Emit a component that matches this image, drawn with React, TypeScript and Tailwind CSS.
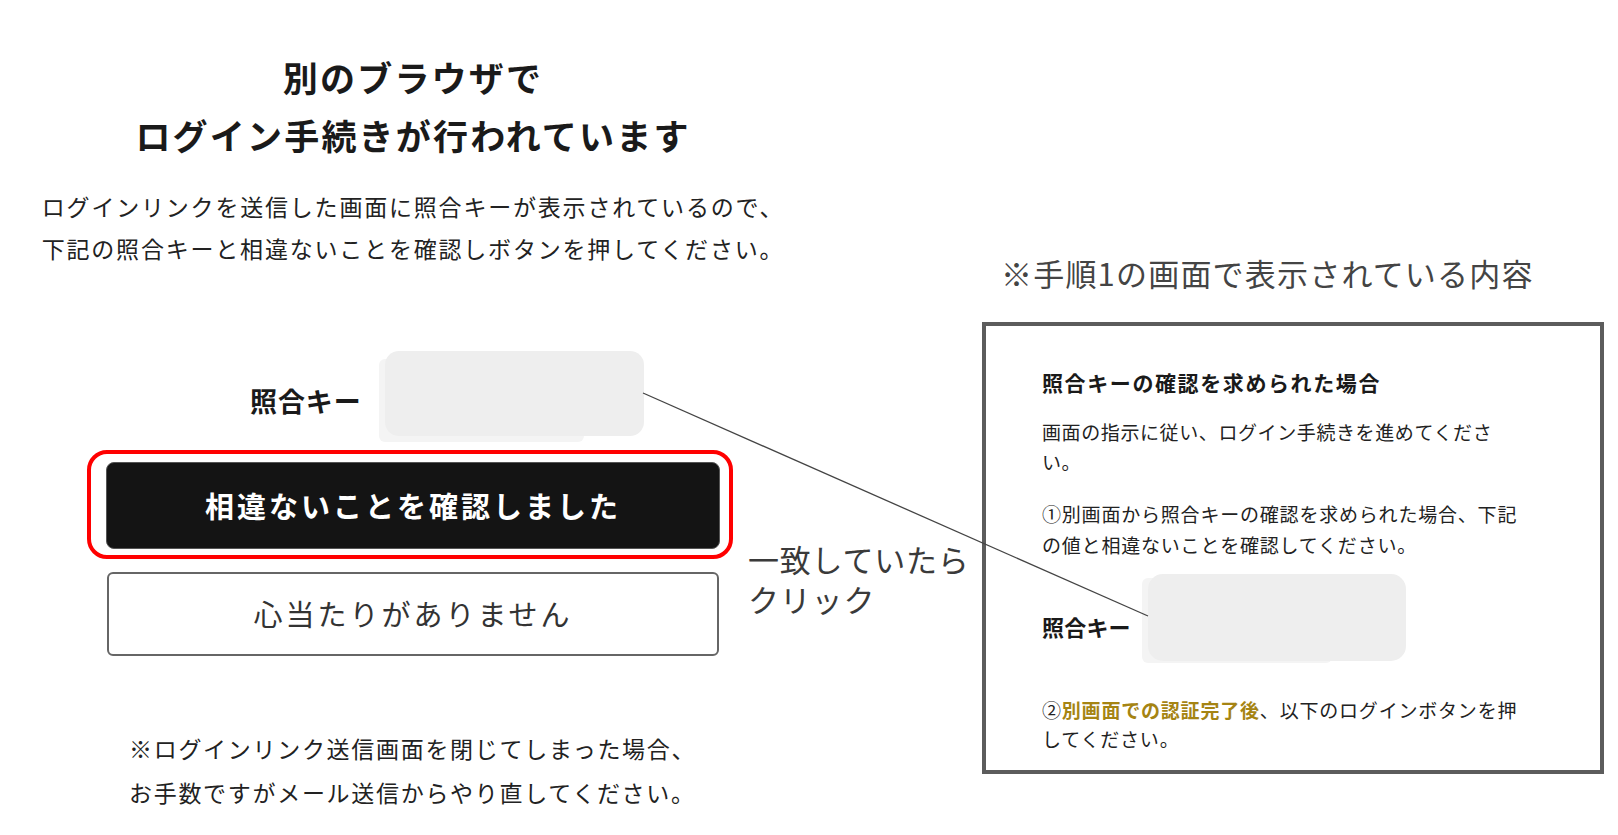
import React from "react";

const jp = { fontFamily: '"Noto Sans CJK JP", "Noto Sans", sans-serif' };

export default function App() {
  return (
    <div
      className="relative w-[1618px] h-[835px] bg-white overflow-hidden flex items-start text-[#222]"
      style={jp}
    >
      {/* Left column */}
      <div className="w-[826px] shrink-0 flex flex-col items-center pt-[48px]">
        <h1 className="text-center text-[35px] leading-[58px] font-bold tracking-[2.2px] text-[#1a1a1a]">
          別のブラウザで
          <br />
          ログイン手続きが行われています
        </h1>
        <p className="mt-[21px] text-center text-[23px] leading-[42px] tracking-[1.8px] whitespace-nowrap">
          ログインリンクを送信した画面に照合キーが表示されているので、
          <br />
          下記の照合キーと相違ないことを確認しボタンを押してください。
        </p>

        <div className="self-start ml-[250px] mt-[82px] flex items-center gap-[23px]">
          <span className="pt-[14px] text-[27px] leading-[36px] font-bold tracking-[0.9px] text-[#1a1a1a]">
            照合キー
          </span>
          <div className="relative w-[259px] h-[85px]">
            <div className="absolute left-[-6px] top-[8px] w-[205px] h-[83px] rounded-[6px] bg-[#f4f4f4]" />
            <div className="absolute inset-0 rounded-[14px] bg-[#eeeeee]" />
          </div>
        </div>

        <div className="self-start ml-[87px] mt-[14px] w-[646px] h-[109px] border-[4px] border-[#ff0000] rounded-[20px] pt-[8px] pl-[15px] pr-[9px]">
          <button className="w-full h-[87px] rounded-[8px] bg-[#141414] border border-[#555] text-white text-[29px] font-bold tracking-[3px] flex items-center justify-center">
            相違ないことを確認しました
          </button>
        </div>

        <button className="self-start ml-[107px] mt-[13px] w-[612px] h-[84px] rounded-[6px] bg-white border-2 border-[#666] text-[#333] text-[29px] tracking-[3px] flex items-center justify-center">
          心当たりがありません
        </button>

        <p className="self-start ml-[129px] mt-[70px] text-[23px] leading-[44.4px] tracking-[1.7px] whitespace-nowrap">
          ※ログインリンク送信画面を閉じてしまった場合、
          <br />
          お手数ですがメール送信からやり直してください。
        </p>
      </div>

      {/* Right column */}
      <div className="ml-[156px] flex flex-col pt-[253px]">
        <div className="ml-[19px] text-[31px] leading-[40px] tracking-[1.2px] text-[#444] whitespace-nowrap">
          ※手順1の画面で表示されている内容
        </div>
        <div className="mt-[29px] w-[622px] h-[452px] border-[4px] border-[#5c5c5c] pl-[56px] pt-[41px]">
          <div className="text-[21px] leading-[30px] font-bold tracking-[1.6px] text-[#1a1a1a] whitespace-nowrap">
            照合キーの確認を求められた場合
          </div>
          <p className="mt-[20px] text-[19px] leading-[30px] tracking-[0.6px] whitespace-nowrap">
            画面の指示に従い、ログイン手続きを進めてくださ
            <br />
            い。
          </p>
          <p className="mt-[21px] text-[19px] leading-[31px] tracking-[0.8px] whitespace-nowrap">
            ①別画面から照合キーの確認を求められた場合、下記
            <br />
            の値と相違ないことを確認してください。
          </p>
          <div className="mt-[14px] flex items-center gap-[17px]">
            <span className="pt-[16px] text-[22px] leading-[30px] font-bold tracking-[0.2px] text-[#1a1a1a]">
              照合キー
            </span>
            <div className="relative w-[258px] h-[87px]">
              <div className="absolute left-[-6px] top-[4px] w-[190px] h-[85px] rounded-[6px] bg-[#f4f4f4]" />
              <div className="absolute inset-0 rounded-[15px] bg-[#eeeeee]" />
            </div>
          </div>
          <p className="mt-[34px] text-[19px] leading-[29px] tracking-[0.8px] whitespace-nowrap">
            ②<span className="font-bold text-[#a58413]">別画面での認証完了後</span>、以下のログインボタンを押
            <br />
            してください。
          </p>
        </div>
      </div>

      {/* Annotation text */}
      <div className="absolute left-[748px] top-[539px] flex flex-col text-[31px] leading-[39.5px] tracking-[0.8px] text-[#3a3a3a] whitespace-nowrap">
        <span>一致していたら</span>
        <span>クリック</span>
      </div>

      {/* Connecting line */}
      <svg className="absolute left-0 top-0 pointer-events-none" width="1618" height="835">
        <line x1="643" y1="393" x2="1148" y2="616" stroke="#444" strokeWidth="1.3" />
      </svg>
    </div>
  );
}
